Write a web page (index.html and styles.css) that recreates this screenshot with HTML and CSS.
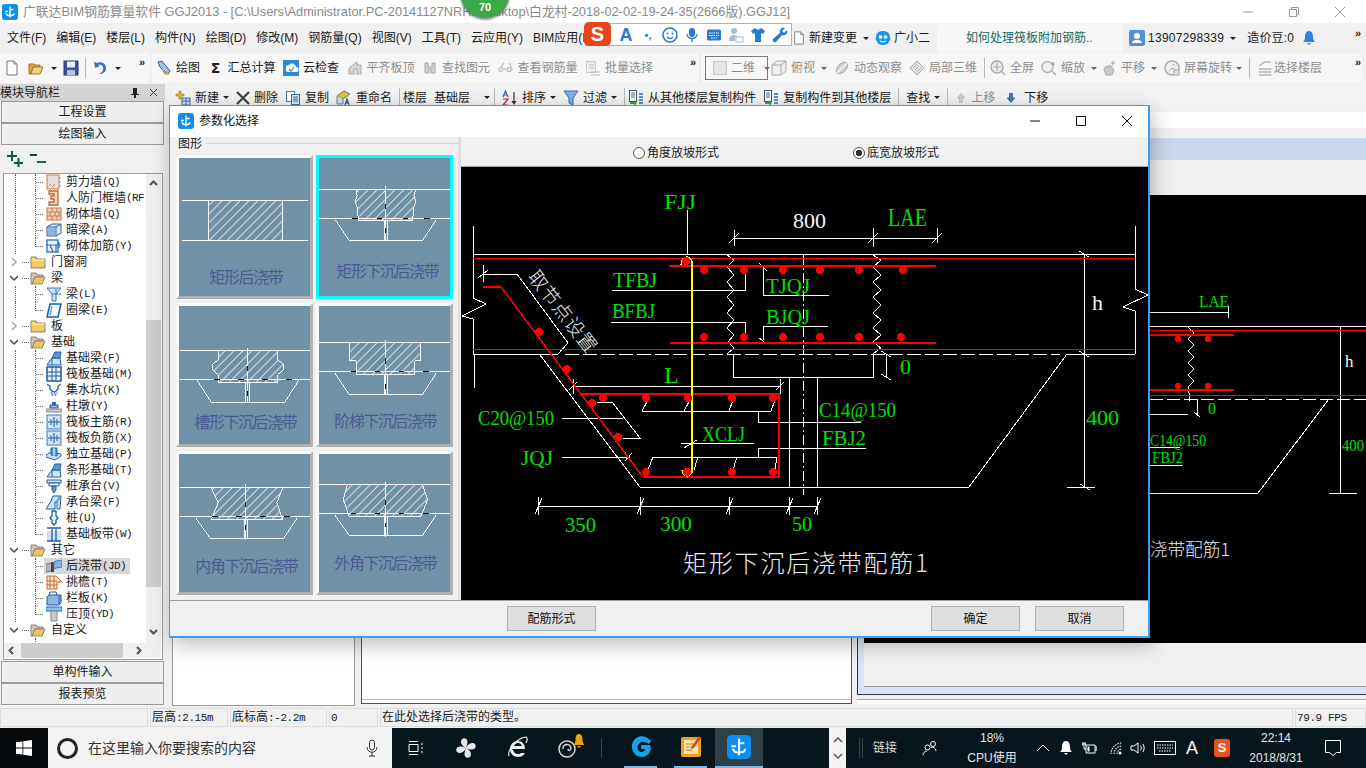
FILE: index.html
```html
<!DOCTYPE html>
<html lang="zh-CN">
<head>
<meta charset="utf-8">
<title>广联达BIM钢筋算量软件 GGJ2013</title>
<link rel="stylesheet" href="styles.css">
</head>
<body>
<svg class="defs" width="0" height="0" aria-hidden="true">
  <defs>
    <pattern id="hatch" patternUnits="userSpaceOnUse" width="9" height="9"><path d="M-1 10L10 -1M-1 1L1 -1M8 10L10 8" stroke="#fff" stroke-width="1" fill="none"/></pattern>
    <symbol id="app" viewBox="0 0 16 16"><rect width="16" height="16" rx="3" fill="#0c8ff0"/><path d="M8 2.500v11M8 5.500h3.500M3 7.500h3M4.200 9.200a2.200 2.200 0 0 0 2.200 2.300h3.400a2.200 2.200 0 0 0 2.200-2.300" fill="none" stroke="#fff" stroke-width="1.400"/></symbol>
    <symbol id="tdoc" viewBox="0 0 16 16"><path d="M3 1h7l3 3v11H3z" fill="#fff" stroke="#777"/><path d="M10 1v3h3" fill="#ddd" stroke="#777"/></symbol>
    <symbol id="topen" viewBox="0 0 16 16"><path d="M1 4h5l1 1h5v2H5L3 14H1z" fill="#d9a93c" stroke="#9c7a28"/><path d="M5 7h10l-3 7H3z" fill="#f3d27a" stroke="#9c7a28"/></symbol>
    <symbol id="tsave" viewBox="0 0 16 16"><rect x="1" y="1" width="14" height="14" fill="#3e4fa8" stroke="#2a3570"/><rect x="4" y="1.500" width="8" height="6" fill="#e8eef8"/><rect x="4" y="10" width="8" height="5" fill="#b9c4dc"/></symbol>
    <symbol id="tundo" viewBox="0 0 16 16"><path d="M2 2l1 6 5-2-2-1c3-1 6 1 5 5-.5 2-2 3-4 4 4 0 7-2 7-6 0-5-6-7-9-5z" fill="#2f78c8"/></symbol>
    <symbol id="tdraw" viewBox="0 0 16 16"><path d="M2 2l4-1 4 5 4 5-2 3-4-3-4-4z" fill="#9ec2e8" stroke="#2f5fa0"/><path d="M6 9l3 5h4" fill="none" stroke="#d9a93c" stroke-width="1.500"/></symbol>
    <symbol id="tcloud" viewBox="0 0 16 16"><rect width="16" height="16" fill="#2e8ad8"/><path d="M3 9a3 3 0 0 1 3-4 4 4 0 0 1 7 2 2.500 2.500 0 0 1 0 5H5a2.500 2.500 0 0 1-2-3z" fill="#fff"/><path d="M6 9l2 2 3-4" fill="none" stroke="#2e8ad8" stroke-width="1.200"/></symbol>
    <symbol id="gflat" viewBox="0 0 16 16"><path d="M2 14V8l8-6v3h4v9z" fill="#d4d4d4" stroke="#aaa"/><path d="M7 14V9h3v5" fill="#eee" stroke="#aaa"/></symbol>
    <symbol id="gfind" viewBox="0 0 16 16"><path d="M3 3h3v4h4V3h3v10H9V9H7v4H3z" fill="#cfcfcf" stroke="#aaa"/></symbol>
    <symbol id="gview" viewBox="0 0 16 16"><path d="M1 10c0-3 3-3 4-1 0 3-4 3-4 1zM9 10c0-3 4-3 5-1 0 3-5 3-5 1zM6 9h2M3 7l3-4M13 7l-1-4" fill="none" stroke="#b5b5b5" stroke-width="1.200"/></symbol>
    <symbol id="gbatch" viewBox="0 0 16 16"><rect x="1.500" y="1.500" width="9" height="11" fill="#eee" stroke="#b5b5b5" stroke-dasharray="2 1"/><path d="M4 5h5M4 8h5M6 12h9M6 15h9" stroke="#bbb"/></symbol>
    <symbol id="gbox" viewBox="0 0 16 16"><path d="M1 5l5-4h9v10l-5 4H1zM1 5h9v10M10 5l5-4" fill="#eee" stroke="#aaa"/></symbol>
    <symbol id="gorbit" viewBox="0 0 16 16"><ellipse cx="8" cy="8" rx="7" ry="4" transform="rotate(-45 8 8)" fill="#d0d0d0" stroke="#aaa"/><path d="M3 13L13 3" stroke="#eee" stroke-width="2"/></symbol>
    <symbol id="glocal" viewBox="0 0 16 16"><path d="M1 8l7-7 7 7-7 7z" fill="#e4e4e4" stroke="#aaa"/><path d="M4 8l4-4M6 10l4-4M8 12l4-4" stroke="#aaa"/></symbol>
    <symbol id="gfull" viewBox="0 0 16 16"><circle cx="7" cy="7" r="6" fill="#eee" stroke="#aaa" stroke-width="1.500"/><path d="M7 3v8M3 7h8M11 11l4 4" stroke="#aaa" stroke-width="1.200"/></symbol>
    <symbol id="gzoom" viewBox="0 0 16 16"><circle cx="6.500" cy="7" r="5.500" fill="#f0f0f0" stroke="#b5b5b5" stroke-width="1.500"/><path d="M11 11l4 4M12 2v4M10 4h4" stroke="#aaa" stroke-width="1.300"/></symbol>
    <symbol id="gpan" viewBox="0 0 16 16"><path d="M3 9l2-3 2 1 1-2 3 2 2 3-2 5H5z" fill="#c8c8c8" stroke="#aaa"/><path d="M12 1v5M10 3h4" stroke="#aaa"/></symbol>
    <symbol id="grot" viewBox="0 0 16 16"><rect x="1" y="1" width="14" height="14" rx="7" fill="#eee" stroke="#aaa" stroke-width="1.500"/><path d="M5 11l3-3 3 1M8 5h3" fill="none" stroke="#aaa"/><rect x="10" y="10" width="5" height="5" fill="#ddd" stroke="#aaa"/></symbol>
    <symbol id="gfloor" viewBox="0 0 16 16"><path d="M2 6l6-4h6M2 9h12M2 12h12M2 15h12" fill="none" stroke="#b5b5b5" stroke-width="1.300"/></symbol>
    <symbol id="rnew" viewBox="0 0 16 16"><path d="M1 4h3V1h2v3h3v2H6v3H4V6H1z" fill="#e6b91e" stroke="#8a6d10" stroke-width=".5"/><rect x="7" y="8" width="8" height="7" fill="#cfe0f5" stroke="#3c6aa8"/><path d="M7 11h8M11 8v7" stroke="#3c6aa8"/></symbol>
    <symbol id="rcopy" viewBox="0 0 16 16"><rect x="1.500" y="1.500" width="8" height="10" fill="#fff" stroke="#5b7ba8"/><rect x="6.500" y="4.500" width="8" height="10" fill="#dce8f6" stroke="#3c6aa8"/><path d="M8 7h5M8 9h5M8 11h5" stroke="#3c6aa8"/></symbol>
    <symbol id="rren" viewBox="0 0 16 16"><path d="M1 6l7-5 6 3-7 5z" fill="#d9c05a" stroke="#8a7a30"/><path d="M1 6v8h6V9" fill="#cde" stroke="#778"/><path d="M9 15l2-6 2 6M10 13h2" fill="none" stroke="#2f5fa0" stroke-width="1.400"/></symbol>
    <symbol id="rsort" viewBox="0 0 16 16"><path d="M12 2v11" stroke="#333" stroke-width="1.200"/><path d="M9.500 11l2.500 4 2.500-4z" fill="#333"/><path d="M1 7l2.500-6L6 7M2 5h3" fill="none" stroke="#2f5fa0" stroke-width="1.200"/><path d="M1 9h5l-5 6h5" fill="none" stroke="#b03030" stroke-width="1.200"/></symbol>
    <symbol id="rfilter" viewBox="0 0 16 16"><path d="M1 1h14L10 8v7l-4-2V8z" fill="#7fb2e6" stroke="#2f6fb8"/></symbol>
    <symbol id="rcp1" viewBox="0 0 16 16"><rect x="1.500" y=".5" width="7" height="11" fill="#fff" stroke="#555"/><path d="M3 3h4M3 5h4M3 7h4" stroke="#2f6fb8"/><path d="M2 12h4v-2l3 3-3 3v-2H2z" fill="#3aa03a"/><path d="M11 4h4M11 7h4M11 10h4M11 13h4" stroke="#2f6fb8" stroke-width="1.400"/></symbol>
    <symbol id="rup" viewBox="0 0 16 16"><path d="M8 2l5 6h-3v6H6V8H3z" fill="#cfcfcf" stroke="#bbb"/></symbol>
    <symbol id="rdown" viewBox="0 0 16 16"><path d="M8 14L3 8h3V2h4v6h3z" fill="#3a78c8" stroke="#2a5aa0"/></symbol>
    <symbol id="robot" viewBox="0 0 16 16"><path d="M8 1c4 0 7 2 7 6 1 2 0 4-1 4 0 3-3 4-6 4s-6-1-6-4c-1 0-2-2-1-4 0-4 3-6 7-6z" fill="#1d9be8"/><circle cx="5.500" cy="7" r="1.800" fill="#fff"/><circle cx="10.500" cy="7" r="1.800" fill="#fff"/><path d="M5 11q3 2 6 0" fill="none" stroke="#fff"/></symbol>
    <symbol id="user" viewBox="0 0 16 16"><rect width="16" height="16" rx="2" fill="#4f94d0"/><circle cx="8" cy="6" r="3" fill="#fff"/><path d="M3 13c1-3 3-3 5-3s4 0 5 3z" fill="#fff"/></symbol>
    <symbol id="bell" viewBox="0 0 16 16"><path d="M8 1c3 0 4 3 4 6s1 4 2 5H2c1-1 2-2 2-5s1-6 4-6zM6 13h4l-2 2z" fill="#2d83e6"/></symbol>
    <symbol id="folder" viewBox="0 0 16 16"><path d="M1 3h5l1 2h8v9H1z" fill="#f0cc62" stroke="#8c8468"/><path d="M1.500 6h13" stroke="#fff3c4"/></symbol>
    <symbol id="folderopen" viewBox="0 0 16 16"><path d="M1 3h5l1 2h6v2H5l-3 7H1z" fill="#cfc8a8" stroke="#8c8468"/><path d="M5 7h10l-3 7H2z" fill="#f0c95e" stroke="#8c8468"/></symbol>
    <symbol id="t1" viewBox="0 0 16 16"><rect x="1" y="1" width="12" height="14" fill="#e4e0dc" stroke="#c87a50"/><path d="M3 12l2-2M6 13l3-3M14 3v2M14 7v2M14 11v2" stroke="#c87a50"/></symbol>
    <symbol id="t2" viewBox="0 0 16 16"><path d="M3 1h9v14H3v-3h5V9H5V6h3V4H3z" fill="#f4d8c4" stroke="#c8642c" stroke-width="1.300"/></symbol>
    <symbol id="t3" viewBox="0 0 16 16"><rect x="1" y="2" width="14" height="12" fill="#f4d2b8" stroke="#c87a50"/><path d="M1 6h14M1 10h14M6 2v4M11 2v4M4 6v4M9 6v4M13 6v4M6 10v4M11 10v4" stroke="#c87a50"/></symbol>
    <symbol id="t4" viewBox="0 0 16 16"><path d="M1 5l5-3h9v9l-5 3H1z" fill="#d6e6f6" stroke="#2f5f98"/><path d="M1 5h9v9M10 5l5-3" fill="none" stroke="#2f5f98"/><rect x="2" y="6" width="7" height="7" fill="#8fb6dd"/></symbol>
    <symbol id="t5" viewBox="0 0 16 16"><rect x="1" y="2" width="11" height="12" fill="#eaf2fb" stroke="#1f6fc0" stroke-width="1.300"/><path d="M0 7h15M10 7v7M4 7l3 7M13 4v6" stroke="#1f6fc0" stroke-width="1.200" fill="none"/></symbol>
    <symbol id="t6" viewBox="0 0 16 16"><path d="M1 2h14l-5 6v7H6V8z" fill="#cfe3f7" stroke="#2878c8"/><path d="M6 8h9M10 8V3" stroke="#2878c8"/></symbol>
    <symbol id="t7" viewBox="0 0 16 16"><path d="M4 2h11l-3 13H1z" fill="#f3f8fd" stroke="#1b5ca8" stroke-width="1.500"/><path d="M6 4l-2 9" stroke="#6aa5e0" stroke-width="1.500"/></symbol>
    <symbol id="t8" viewBox="0 0 16 16"><path d="M1 15l5-7h8l1 7z" fill="#cfe3f7" stroke="#1b5ca8"/><path d="M6 8l3-6h6l-1 6z" fill="#5b96d4" stroke="#1b5ca8"/><path d="M6 15V9" stroke="#1b5ca8"/></symbol>
    <symbol id="t9" viewBox="0 0 16 16"><rect x="1" y="1" width="14" height="14" fill="#eaf2fb" stroke="#1b5ca8" stroke-width="1.500"/><path d="M6 1v14M10 1v14M1 6h14M1 10h14" stroke="#1b5ca8"/></symbol>
    <symbol id="t10" viewBox="0 0 16 16"><path d="M1 2l3 2v3l3 3h2l3-3V4l3-2" fill="none" stroke="#1b5ca8" stroke-width="1.300"/><path d="M4 10h8l-2 4H6z" fill="#bcd4ec"/><path d="M5 11h1M8 11h1M11 11h.5M6 13h1M9 13h1" stroke="#1b5ca8"/></symbol>
    <symbol id="t11" viewBox="0 0 16 16"><path d="M6 4h4v3H6z" fill="#1f6fc0"/><path d="M4 7h8v3H4z" fill="#8fb6dd" stroke="#1b5ca8"/><rect x="0" y="11" width="16" height="3" fill="#c8c8c8" stroke="#888"/></symbol>
    <symbol id="t12" viewBox="0 0 16 16"><rect x="1" y="1" width="14" height="14" fill="#cfe3f7" stroke="#3c78c0"/><path d="M2 8h12M8 3v10M5 5v6M11 5v6" stroke="#1b5ca8"/></symbol>
    <symbol id="t13" viewBox="0 0 16 16"><path d="M0 9l5-3 10 2v2l-6 4-9-3z" fill="#cfe3f7" stroke="#1b5ca8"/><path d="M5 9V2h6v8z" fill="#5b96d4" stroke="#1b5ca8"/><path d="M8 2v8" stroke="#fff"/></symbol>
    <symbol id="t14" viewBox="0 0 16 16"><path d="M0 15l5-8 2-5h8l-1 13H11V8L9 8v7z" fill="#cfe3f7" stroke="#1b5ca8"/><path d="M11 8l3-6" stroke="#5b96d4" stroke-width="2"/></symbol>
    <symbol id="t15" viewBox="0 0 16 16"><path d="M1 2h14v3H1z" fill="#cfe3f7" stroke="#1b5ca8"/><path d="M3 5h10v3H3z" fill="#fff" stroke="#1b5ca8"/><path d="M6 8h4v4l-2 3-2-3z" fill="#5b96d4" stroke="#1b5ca8"/></symbol>
    <symbol id="t16" viewBox="0 0 16 16"><path d="M6 1h4v5l2 2-2 2v3l-2 2-2-2v-3L4 8l2-2z" fill="#eaf2fb" stroke="#1b5ca8" stroke-width="1.300"/></symbol>
    <symbol id="t17" viewBox="0 0 16 16"><path d="M1 2h14M1 15h14" stroke="#1b5ca8" stroke-width="1.500"/><path d="M1 5h14v9H1z" fill="#cfe3f7"/><path d="M6 3v12M10 3v12" stroke="#1b5ca8" stroke-width="1.300"/></symbol>
    <symbol id="t18" viewBox="0 0 16 16"><path d="M0 6l6-1v8l-6 1z" fill="#a8b8c8" stroke="#778"/><path d="M5 4h3v10H5z" fill="#6b3a1c"/><path d="M8 4l2-1 6-1v7l-6 1-2 1z" fill="#7fb2e6" stroke="#4a7ab8"/></symbol>
    <symbol id="t19" viewBox="0 0 16 16"><path d="M1 2h9l5 5v1h-4v7H1z" fill="#fbe6d4" stroke="#c8642c"/><path d="M1 7h10M1 11h10M4 2v13M8 2v13" stroke="#c8642c"/></symbol>
    <symbol id="t20" viewBox="0 0 16 16"><path d="M1 7l2-2h12v8l-2 2H1z" fill="#8fb6dd" stroke="#1b5ca8"/><path d="M3 5l1-3h6l1 3" fill="none" stroke="#1b5ca8"/><path d="M13 6v8" stroke="#1b5ca8"/></symbol>
    <symbol id="t21" viewBox="0 0 16 16"><rect x="0" y="1" width="16" height="4" fill="#8fc0ee" stroke="#1f6fc0"/><rect x="5" y="5" width="6" height="10" fill="#ccc" stroke="#888"/></symbol>
  </defs>
</svg>

<header class="titlebar">
  <svg class="ic16"><use href="#app"/></svg>
  <span class="title-text">广联达BIM钢筋算量软件 GGJ2013 - [C:\Users\Administrator.PC-20141127NRHI\Desktop\白龙村-2018-02-02-19-24-35(2666版).GGJ12]</span>
  <div class="winctl">
    <svg width="12" height="12" viewBox="0 0 12 12"><path d="M1 6h10" stroke="#999"/></svg>
    <svg width="12" height="12" viewBox="0 0 12 12"><path d="M1.500 3.500h7v7h-7zM3.500 3V1.500h7v7H9" fill="none" stroke="#999"/></svg>
    <svg width="12" height="12" viewBox="0 0 12 12"><path d="M1 1l10 10M11 1L1 11" stroke="#999"/></svg>
  </div>
</header>

<nav class="menubar">
  <div class="menu">
    <span>文件(F)</span><span>编辑(E)</span><span>楼层(L)</span><span>构件(N)</span><span>绘图(D)</span><span>修改(M)</span><span>钢筋量(Q)</span><span>视图(V)</span><span>工具(T)</span><span>云应用(Y)</span><span>BIM应用(I)</span>
  </div>
  <div class="menu-right">
    <svg class="ic14"><use href="#tdoc"/></svg>
    <span class="ml3">新建变更</span><i class="caret ml6"></i>
    <svg class="ic16 ml6"><use href="#robot"/></svg>
    <span class="ml3">广小二</span>
    <div class="news-tab">如何处理筏板附加钢筋..</div>
    <svg class="ic16 ml6"><use href="#user"/></svg>
    <span class="phone">13907298339</span><i class="caret ml6"></i>
    <span class="beans">造价豆:0</span>
    <svg class="ic16 bell-ic"><use href="#bell"/></svg>
    <b class="more more-end">»</b>
  </div>
</nav>

<div class="toolbars">
  <div class="tbar tbar-a">
    <svg class="ic16"><use href="#tdoc"/></svg>
    <svg class="ic16 ml8"><use href="#topen"/></svg><i class="caret ml7"></i>
    <svg class="ic16 ml6"><use href="#tsave"/></svg>
    <i class="sep ml6"></i>
    <svg class="ic16 ml6"><use href="#tundo"/></svg><i class="caret ml7"></i>
    <b class="more ml18">»</b>
  </div>
  <div class="tbar tbar-b">
    <span class="tool"><svg class="ic16"><use href="#tdraw"/></svg>绘图</span>
    <span class="tool"><b class="sigma">Σ</b>汇总计算</span>
    <span class="tool"><svg class="ic16"><use href="#tcloud"/></svg>云检查</span>
    <span class="tool off"><svg class="ic16"><use href="#gflat"/></svg>平齐板顶</span>
    <span class="tool off"><svg class="ic16"><use href="#gfind"/></svg>查找图元</span>
    <span class="tool off"><svg class="ic16"><use href="#gview"/></svg>查看钢筋量</span>
    <span class="tool off"><svg class="ic16"><use href="#gbatch"/></svg>批量选择</span>
    <b class="more push">»</b>
  </div>
  <div class="tbar tbar-c">
    <span class="combo off"><i class="swatch"></i>二维<i class="caret"></i></span>
    <span class="tool off"><svg class="ic16"><use href="#gbox"/></svg>俯视<i class="caret ml2"></i></span>
    <span class="tool off"><svg class="ic16"><use href="#gorbit"/></svg>动态观察</span>
    <span class="tool off"><svg class="ic16"><use href="#glocal"/></svg>局部三维</span>
    <i class="sep sep-tight"></i>
    <span class="tool off"><svg class="ic16"><use href="#gfull"/></svg>全屏</span>
    <span class="tool off"><svg class="ic16"><use href="#gzoom"/></svg>缩放<i class="caret ml2"></i></span>
    <span class="tool off nudge"><svg class="ic16"><use href="#gpan"/></svg>平移<i class="caret ml2"></i></span>
    <span class="tool off"><svg class="ic16"><use href="#grot"/></svg>屏幕旋转<i class="caret"></i></span>
    <i class="sep"></i>
    <span class="tool off snug"><svg class="ic16"><use href="#gfloor"/></svg>选择楼层</span>
    <b class="more push">»</b>
  </div>
</div>

<main class="workspace">
  <aside class="nav">
    <div class="nav-head"><span>模块导航栏</span>
      <svg class="nav-pin" width="10" height="12" viewBox="0 0 10 12"><path d="M3 1h4v6h2v1H6v3H4V8H1V7h2z" fill="#222"/></svg>
      <svg width="9" height="9" viewBox="0 0 9 9"><path d="M1 1l7 7M8 1L1 8" stroke="#333"/></svg>
    </div>
    <div class="nav-btn">工程设置</div>
    <div class="nav-btn">绘图输入</div>
    <div class="tree-tools">
      <svg width="17" height="16" viewBox="0 0 17 16"><path d="M0 5h10M5 0v10M7 12h9M11.500 7v9" stroke="#0e5a3c" stroke-width="2"/></svg>
      <svg width="17" height="16" viewBox="0 0 17 16"><path d="M0 4h7" stroke="#0e4a3c" stroke-width="2"/><path d="M7 11h9" stroke="#0e6a4c" stroke-width="2"/></svg>
    </div>
    <div class="tree-box">
      <div class="tree">
        <div class="row"><i class="g"></i><i class="g twig"></i><span class="lab"><svg class="ic16"><use href="#t1"/></svg>剪力墙<b>(Q)</b></span></div>
        <div class="row"><i class="g"></i><i class="g twig"></i><span class="lab"><svg class="ic16"><use href="#t2"/></svg>人防门框墙<b>(RF</b></span></div>
        <div class="row"><i class="g"></i><i class="g twig"></i><span class="lab"><svg class="ic16"><use href="#t3"/></svg>砌体墙<b>(Q)</b></span></div>
        <div class="row"><i class="g"></i><i class="g twig"></i><span class="lab"><svg class="ic16"><use href="#t4"/></svg>暗梁<b>(A)</b></span></div>
        <div class="row"><i class="g"></i><i class="g twig end"></i><span class="lab"><svg class="ic16"><use href="#t5"/></svg>砌体加筋<b>(Y)</b></span></div>
        <div class="row fold"><svg class="exp" width="8" height="10" viewBox="0 0 8 10"><path d="M2 1l4 4-4 4" fill="none" stroke="#a6a6a6" stroke-width="1.500"/></svg><i class="stub"></i><svg class="ic16"><use href="#folder"/></svg><span class="fold-name">门窗洞</span></div>
        <div class="row fold"><svg class="exp" width="8" height="10" viewBox="0 0 8 10"><path d="M0 3l4 4 4-4" fill="none" stroke="#444" stroke-width="1.500"/></svg><i class="stub"></i><svg class="ic16"><use href="#folderopen"/></svg><span class="fold-name">梁</span></div>
        <div class="row"><i class="g"></i><i class="g twig"></i><span class="lab"><svg class="ic16"><use href="#t6"/></svg>梁<b>(L)</b></span></div>
        <div class="row"><i class="g"></i><i class="g twig end"></i><span class="lab"><svg class="ic16"><use href="#t7"/></svg>圈梁<b>(E)</b></span></div>
        <div class="row fold"><svg class="exp" width="8" height="10" viewBox="0 0 8 10"><path d="M2 1l4 4-4 4" fill="none" stroke="#a6a6a6" stroke-width="1.500"/></svg><i class="stub"></i><svg class="ic16"><use href="#folder"/></svg><span class="fold-name">板</span></div>
        <div class="row fold"><svg class="exp" width="8" height="10" viewBox="0 0 8 10"><path d="M0 3l4 4 4-4" fill="none" stroke="#444" stroke-width="1.500"/></svg><i class="stub"></i><svg class="ic16"><use href="#folderopen"/></svg><span class="fold-name">基础</span></div>
        <div class="row"><i class="g"></i><i class="g twig"></i><span class="lab"><svg class="ic16"><use href="#t8"/></svg>基础梁<b>(F)</b></span></div>
        <div class="row"><i class="g"></i><i class="g twig"></i><span class="lab"><svg class="ic16"><use href="#t9"/></svg>筏板基础<b>(M)</b></span></div>
        <div class="row"><i class="g"></i><i class="g twig"></i><span class="lab"><svg class="ic16"><use href="#t10"/></svg>集水坑<b>(K)</b></span></div>
        <div class="row"><i class="g"></i><i class="g twig"></i><span class="lab"><svg class="ic16"><use href="#t11"/></svg>柱墩<b>(Y)</b></span></div>
        <div class="row"><i class="g"></i><i class="g twig"></i><span class="lab"><svg class="ic16"><use href="#t12"/></svg>筏板主筋<b>(R)</b></span></div>
        <div class="row"><i class="g"></i><i class="g twig"></i><span class="lab"><svg class="ic16"><use href="#t12"/></svg>筏板负筋<b>(X)</b></span></div>
        <div class="row"><i class="g"></i><i class="g twig"></i><span class="lab"><svg class="ic16"><use href="#t13"/></svg>独立基础<b>(P)</b></span></div>
        <div class="row"><i class="g"></i><i class="g twig"></i><span class="lab"><svg class="ic16"><use href="#t8"/></svg>条形基础<b>(T)</b></span></div>
        <div class="row"><i class="g"></i><i class="g twig"></i><span class="lab"><svg class="ic16"><use href="#t15"/></svg>桩承台<b>(V)</b></span></div>
        <div class="row"><i class="g"></i><i class="g twig"></i><span class="lab"><svg class="ic16"><use href="#t14"/></svg>承台梁<b>(F)</b></span></div>
        <div class="row"><i class="g"></i><i class="g twig"></i><span class="lab"><svg class="ic16"><use href="#t16"/></svg>桩<b>(U)</b></span></div>
        <div class="row"><i class="g"></i><i class="g twig end"></i><span class="lab"><svg class="ic16"><use href="#t17"/></svg>基础板带<b>(W)</b></span></div>
        <div class="row fold"><svg class="exp" width="8" height="10" viewBox="0 0 8 10"><path d="M0 3l4 4 4-4" fill="none" stroke="#444" stroke-width="1.500"/></svg><i class="stub"></i><svg class="ic16"><use href="#folderopen"/></svg><span class="fold-name">其它</span></div>
        <div class="row"><i class="g"></i><i class="g twig"></i><span class="lab sel"><svg class="ic16"><use href="#t18"/></svg>后浇带<b>(JD)</b></span></div>
        <div class="row"><i class="g"></i><i class="g twig"></i><span class="lab"><svg class="ic16"><use href="#t19"/></svg>挑檐<b>(T)</b></span></div>
        <div class="row"><i class="g"></i><i class="g twig"></i><span class="lab"><svg class="ic16"><use href="#t20"/></svg>栏板<b>(K)</b></span></div>
        <div class="row"><i class="g"></i><i class="g twig end"></i><span class="lab"><svg class="ic16"><use href="#t21"/></svg>压顶<b>(YD)</b></span></div>
        <div class="row fold"><svg class="exp" width="8" height="10" viewBox="0 0 8 10"><path d="M0 3l4 4 4-4" fill="none" stroke="#444" stroke-width="1.500"/></svg><i class="stub"></i><svg class="ic16"><use href="#folderopen"/></svg><span class="fold-name">自定义</span></div>
        <div class="row"><i class="g blank"></i><i class="g twig"></i></div>
      </div>
      <div class="vbar">
        <svg class="vup" width="15" height="15" viewBox="0 0 15 15"><path d="M4 9l3.500-3.500L11 9" fill="none" stroke="#555" stroke-width="2"/></svg>
        <i class="vthumb"></i>
        <svg class="vdown" width="15" height="15" viewBox="0 0 15 15"><path d="M4 6l3.500 3.500L11 6" fill="none" stroke="#555" stroke-width="2"/></svg>
      </div>
      <div class="hbar">
        <svg width="15" height="15" viewBox="0 0 15 15"><path d="M9 4L5.500 7.500 9 11" fill="none" stroke="#555" stroke-width="2"/></svg>
        <i class="hthumb"></i>
        <svg class="hright" width="15" height="15" viewBox="0 0 15 15"><path d="M6 4l3.500 3.500L6 11" fill="none" stroke="#555" stroke-width="2"/></svg>
      </div>
      <div class="corner"></div>
    </div>
    <div class="nav-btn nav-btn-low">单构件输入</div>
    <div class="nav-btn">报表预览</div>
  </aside>

  <section class="work">
    <div class="ribbon">
      <span class="tool"><svg class="ic16"><use href="#rnew"/></svg>新建<i class="caret"></i></span>
      <span class="tool"><svg class="ic14" viewBox="0 0 14 14"><path d="M1 1l12 12M13 1L1 13" stroke="#444" stroke-width="2.200"/></svg>删除</span>
      <span class="tool"><svg class="ic16"><use href="#rcopy"/></svg>复制</span>
      <span class="tool"><svg class="ic16"><use href="#rren"/></svg>重命名</span>
      <i class="sep"></i>
      <span class="floor-label">楼层</span>
      <span class="floor-combo">基础层<i class="caret"></i></span>
      <i class="sep"></i>
      <span class="tool"><svg class="ic16"><use href="#rsort"/></svg>排序<i class="caret"></i></span>
      <span class="tool"><svg class="ic16"><use href="#rfilter"/></svg>过滤<i class="caret"></i></span>
      <i class="sep"></i>
      <span class="tool nudge4"><svg class="ic16"><use href="#rcp1"/></svg>从其他楼层复制构件</span>
      <span class="tool"><svg class="ic16"><use href="#rcp1"/></svg>复制构件到其他楼层</span>
      <i class="sep"></i>
      <span class="tool">查找<i class="caret"></i></span>
      <i class="sep"></i>
      <span class="tool off"><svg class="ic12"><use href="#rup"/></svg>上移</span>
      <span class="tool tool-down"><svg class="ic12"><use href="#rdown"/></svg>下移</span>
    </div>
    <div class="panes">
      <div class="pane pane-list"></div>
      <div class="pane pane-mid"><div class="pane-mid-in"></div></div>
      <div class="pane-stack">
        <div class="pc">
          <div class="pc-input"></div>
          <div class="pc-band"></div>
          <div class="pc-light"></div>
          <div class="pc-body">
            <svg class="pc-art art" viewBox="864 195 502 448" width="502" height="448">
              <g class="w">
                <path d="M1150 326H1366M1340 326V494M1329 493H1357M1150 493H1258L1329 399M1150 312H1228M1228 306V318"/>
                <path d="M1150 399H1366" stroke-dasharray="13 4"/>
                <path d="M1188 327l6 6-6 6 6 6-6 6 6 6-6 6 6 6-6 6 6 6-6 6 1 6v8M1150 414H1188M1197 399V414M1194 412l6 5"/>
              </g>
              <path class="thin" d="M1150 330H1366M1150 395H1366"/>
              <path class="thick" d="M1150 335H1234M1150 390H1234"/>
              <g fill="#f00"><circle cx="1178" cy="339" r="3"/><circle cx="1208" cy="339" r="3"/><circle cx="1178" cy="386" r="3"/><circle cx="1208" cy="386" r="3"/></g>
              <path class="w" d="M1150 447H1180M1150 465H1183"/>
              <g class="g-text">
                <text x="1199" y="307" font-size="17" textLength="30" lengthAdjust="spacingAndGlyphs">LAE</text>
                <text x="1208" y="414" font-size="16">0</text>
                <text x="1150" y="446" font-size="16" textLength="56" lengthAdjust="spacingAndGlyphs">C14@150</text>
                <text x="1152" y="463" font-size="17" textLength="31" lengthAdjust="spacingAndGlyphs">FBJ2</text>
                <text x="1342" y="451" font-size="16" textLength="22" lengthAdjust="spacingAndGlyphs">400</text>
              </g>
              <text class="wt" x="1345" y="367" font-size="17">h</text>
              <text class="cap" x="1132" y="556" font-size="18" textLength="98" lengthAdjust="spacingAndGlyphs">后浇带配筋1</text>
            </svg>
            <div class="pc-foot"></div>
          </div>
        </div>
        <div class="pc-rest"></div>
      </div>
    </div>
  </section>
</main>

<footer class="status">
  <span class="cell c0"></span>
  <span class="cell c1">层高<b>:2.15m</b></span>
  <span class="cell c2">底标高<b>:-2.2m</b></span>
  <span class="cell c3"><b>0</b></span>
  <span class="cell c4">在此处选择后浇带的类型。</span>
  <span class="cell c5"><b>79.9 FPS</b></span>
</footer>

<div class="taskbar">
  <div class="start"><svg width="16" height="16" viewBox="0 0 16 16"><path d="M0 2.300l6.500-.9v6.200H0zM7.300 1.300L16 0v7.600H7.300zM0 8.400h6.500v6.200L0 13.700zM7.300 8.400H16V16l-8.700-1.300z" fill="#fff"/></svg></div>
  <div class="search">
    <i class="cortana"></i>
    <span class="search-text">在这里输入你要搜索的内容</span>
    <svg class="mic" width="12" height="18" viewBox="0 0 12 18"><rect x="3.500" y="1" width="5" height="10" rx="2.500" fill="none" stroke="#333"/><path d="M1 8c0 7 10 7 10 0M6 13v4M3 17h6" fill="none" stroke="#333"/></svg>
  </div>
  <div class="apps">
    <svg class="tv" width="16" height="16" viewBox="0 0 16 16"><path d="M1 4.500h9v7H1zM1 1.500h9M1 14.500h9M13 4h2M13 8h2M13 12h2" fill="none" stroke="#fff"/></svg>
    <svg class="tk1" width="22" height="22" viewBox="0 0 22 22"><path d="M11 11C6 9 5 4 7 2c3-2 8 0 4 9zM11 11c2-5 7-6 9-4 2 3 0 8-9 4zM11 11c5 2 6 7 4 9-3 2-8 0-4-9zM11 11c-2 5-7 6-9 4-2-3 0-8 9-4z" fill="#e6e6e6"/></svg>
    <svg class="tk2" width="22" height="24" viewBox="0 0 22 24"><path d="M5 13h13c0-5-3-8-7-8-5 0-8 4-8 8 0 5 4 8 8 8 3 0 5-1 7-4h-4c-1 1-2 1-3 1-3 0-4-2-6-5zM7 10c1-2 2-3 4-3s3 1 4 3z" fill="#eee"/><path d="M2 20C0 14 10 2 19 1c2 1 1 4 0 6" fill="none" stroke="#eee" stroke-width="1.200"/></svg>
    <span class="tk3"><svg width="22" height="22" viewBox="0 0 22 22"><circle cx="10" cy="12" r="8" fill="none" stroke="#d8d8d8" stroke-width="1.500"/><path d="M6 12a4 4 0 0 1 8-1c0 3-3 3-3 1" fill="none" stroke="#d8d8d8" stroke-width="1.500"/></svg><svg class="tk3-bell" width="12" height="14" viewBox="0 0 12 14"><path d="M6 0c3 0 3.500 3 3.500 6s1 3.500 2 5H.5c1-1.500 2-2 2-5S3 0 6 0zM4 12h4l-2 2z" fill="#e8a317"/></svg></span>
    <i class="tsep"></i>
    <span class="tk-slot run run-g"><svg width="24" height="26" viewBox="0 0 24 26"><path d="M17 3C9 0 2 6 3 14c1 7 8 11 14 8 4-2 6-7 4-11h-9v4h4c0 3-4 4-6 2-3-3-1-9 4-9 3 0 5 1 6 2l2-3c-1-1-3-3-5-4z" fill="#18a0ea"/></svg></span>
    <span class="tk-slot run"><svg width="22" height="24" viewBox="0 0 22 24"><rect x="1" y="2" width="20" height="20" rx="2" fill="#f0a21e"/><rect x="4" y="5" width="14" height="14" fill="#ffe6b0"/><path d="M6 9h8M6 12h8M6 15h6" stroke="#c87a10"/><path d="M19 1l2 2-7 10-3 1 1-3z" fill="#c8501e"/></svg></span>
    <span class="tk-slot active"><svg width="24" height="26" viewBox="0 0 16 16"><use href="#app"/></svg></span>
  </div>
  <div class="tray-arrows">
    <svg width="10" height="8" viewBox="0 0 10 8"><path d="M1 6l4-4 4 4" fill="none" stroke="#555" stroke-width="1.500"/></svg>
    <svg width="10" height="8" viewBox="0 0 10 8"><path d="M1 2l4 4 4-4" fill="none" stroke="#555" stroke-width="1.500"/></svg>
  </div>
  <i class="tray-grip"></i>
  <span class="tray-link">链接</span>
  <svg class="tray-people" width="16" height="16" viewBox="0 0 16 16"><circle cx="5.500" cy="7.500" r="2.500" fill="none" stroke="#fff"/><circle cx="11" cy="4" r="2.500" fill="none" stroke="#fff"/><path d="M1 15c0-2 2-4 4-4M9 7c2 0 5 1 5 4" fill="none" stroke="#fff"/></svg>
  <div class="cpu"><span>18%</span><span>CPU使用</span></div>
  <svg class="ti-up" width="14" height="8" viewBox="0 0 14 8"><path d="M1 7l6-6 6 6" fill="none" stroke="#fff"/></svg>
  <svg class="ti-bell" width="14" height="16" viewBox="0 0 14 16"><path d="M7 1c3 0 4 3 4 6s1 4 2 5H1c1-1 2-2 2-5s1-6 4-6zM5 13h4l-2 2z" fill="#fff"/></svg>
  <svg class="ti-plug" width="16" height="14" viewBox="0 0 16 14"><path d="M5 4h9v8H5zM1 3h4M2 1v4M4 1v4M3 5v3h2M14 6h2v3h-2" fill="none" stroke="#fff"/><rect x="6.500" y="5.500" width="2" height="5" fill="#fff"/></svg>
  <svg class="ti-wifi" width="16" height="14" viewBox="0 0 16 14"><path d="M2 13a11 11 0 0 1 11-11M5 13a8 8 0 0 1 8-8M8 13a5 5 0 0 1 5-5" fill="none" stroke="#ddd" stroke-width="1.200" stroke-dasharray="1.500 1"/><circle cx="11" cy="12" r="1.500" fill="#fff"/></svg>
  <svg class="ti-spk" width="16" height="14" viewBox="0 0 16 14"><path d="M1 5h3l4-3v10L4 9H1zM10.500 4.500c1 1.500 1 3.500 0 5M13 3c1.500 2.500 1.500 5.500 0 8" fill="none" stroke="#fff"/></svg>
  <svg class="ti-kbd" width="22" height="14" viewBox="0 0 22 14"><rect x=".5" y=".5" width="21" height="13" fill="none" stroke="#fff"/><path d="M3 4h16M3 7h16M5 10h12" stroke="#fff" stroke-dasharray="1.500 1"/></svg>
  <span class="tray-a">A</span>
  <span class="tray-s">S</span>
  <div class="clock"><span>22:14</span><span>2018/8/31</span></div>
  <svg class="notif" width="16" height="18" viewBox="0 0 16 18"><path d="M.5 1.500h15v12h-4l-3.500 3-3.500-3h-4z" fill="none" stroke="#fff"/></svg>
</div>

<!-- floating overlays -->
<div class="badge70">70</div>
<div class="ime">
  <span class="ime-s">S</span>
  <span class="ime-i ime-a">A</span>
  <span class="ime-i ime-a ime-dot">•,</span>
  <svg class="ime-g" viewBox="0 0 16 16"><circle cx="8" cy="8" r="7" fill="none" stroke="#2878d0" stroke-width="1.600"/><circle cx="5.500" cy="6.500" r="1" fill="#2878d0"/><circle cx="10.500" cy="6.500" r="1" fill="#2878d0"/><path d="M5 10q3 3 6 0" fill="none" stroke="#2878d0" stroke-width="1.300"/></svg>
  <svg class="ime-g" viewBox="0 0 16 16"><rect x="5" y="1" width="6" height="9" rx="3" fill="#2878d0"/><path d="M3 7c0 6 10 6 10 0M8 12v3" fill="none" stroke="#2878d0" stroke-width="1.400"/></svg>
  <svg class="ime-g" viewBox="0 0 16 16"><rect x="1" y="2.500" width="14" height="11" rx="1.500" fill="#2878d0"/><path d="M3 6h10M3 8.500h10M5 11h6" stroke="#fff" stroke-dasharray="1.500 .8"/></svg>
  <svg class="ime-g" viewBox="0 0 16 16"><circle cx="6" cy="4" r="3" fill="#a9bdd2"/><path d="M1 14c0-4 2-6 5-6 2 0 3 1 4 2H7v4z" fill="#a9bdd2"/><rect x="8" y="10" width="7" height="5" fill="#fff" stroke="#a9bdd2"/></svg>
  <svg class="ime-g" viewBox="0 0 16 16"><path d="M5 1L1 4l2 3 2-1v9h6V6l2 1 2-3-4-3-3 2z" fill="#2878d0"/></svg>
  <svg class="ime-g" viewBox="0 0 16 16"><path d="M15 3l-3 3-2-2 3-3c-3-1-6 1-5 5L1 12c-1 2 1 4 3 3l6-7c4 1 6-2 5-5z" fill="#2878d0"/></svg>
</div>

<div class="dialog">
  <div class="dlg-title">
    <svg class="ic16"><use href="#app"/></svg>
    <span class="dlg-name">参数化选择</span>
    <div class="dlg-ctl">
      <svg width="12" height="12" viewBox="0 0 12 12"><path d="M1 6h10" stroke="#111"/></svg>
      <svg width="12" height="12" viewBox="0 0 12 12"><path d="M1.500 1.500h9v9h-9z" fill="none" stroke="#111"/></svg>
      <svg width="12" height="12" viewBox="0 0 12 12"><path d="M1 1l10 10M11 1L1 11" stroke="#111"/></svg>
    </div>
  </div>
  <div class="dlg-body">
    <div class="shapes">
      <span class="group-label">图形</span>
      <div class="shape-grid">
        <svg class="card art" viewBox="179 158 131 139">
          <rect x="208" y="201" width="75" height="40" fill="url(#hatch)" stroke="#fff"/>
          <path class="w" d="M182 201H308M182 241H308"/>
          <text class="card-text" x="209" y="284" textLength="75">矩形后浇带</text>
        </svg>
        <svg class="card card-on art" viewBox="319 158 131 139">
          <path fill="url(#hatch)" stroke="#fff" d="M356 190H416L414 196 416 202 414 208 413 219V221H358V219L357 208 355 202 357 196z"/>
          <path class="w" d="M319 190H450M319 219H450M335 220L349 241H423L437 220M384 221V241M388 221V241M386 186V242"/>
          <path class="k" d="M352 219H358M377 219H382M403 219H408M424 219H430M386 204V209M386 229V234"/>
          <text class="card-text" x="336" y="278" textLength="104">矩形下沉后浇带</text>
        </svg>
        <svg class="card art" viewBox="179 306 131 139">
          <path fill="url(#hatch)" stroke="#fff" d="M218 351H278V360L284 365V370L278 375V383H218V375L212 370V365L218 360z"/>
          <path class="w" d="M180 351H310M180 380H310M197 381L211 403H285L299 381M246 383V403M250 383V403M248 348V404"/>
          <path class="k" d="M214 380H220M238 380H244M262 380H268M286 380H292M248 366V371M248 392V397"/>
          <text class="card-text" x="194" y="429" textLength="104">槽形下沉后浇带</text>
        </svg>
        <svg class="card art" viewBox="319 306 131 139">
          <path fill="url(#hatch)" stroke="#fff" d="M349 343H421V361H415V375H356V361H349z"/>
          <path class="w" d="M319 343H450M319 372H450M334 373L349 395H423L437 373M384 375V395M388 375V395M386 340V396"/>
          <path class="k" d="M351 372H356M375 372H380M399 372H404M423 372H429M386 358V364M386 385V390"/>
          <text class="card-text" x="334" y="428" textLength="104">阶梯下沉后浇带</text>
        </svg>
        <svg class="card art" viewBox="179 454 131 139">
          <path fill="url(#hatch)" stroke="#fff" d="M211 488H283L277 503 283 520H211L218 503z"/>
          <path class="w" d="M180 488H310M180 517H310M195 518L210 539H284L298 518M244 520V539M248 520V539M246 484V541"/>
          <path class="k" d="M212 517H218M236 517H242M260 517H266M284 517H290M246 502V507M246 526V531"/>
          <text class="card-text" x="195" y="573" textLength="104">内角下沉后浇带</text>
        </svg>
        <svg class="card art" viewBox="319 454 131 139">
          <path fill="url(#hatch)" stroke="#fff" d="M347 485H423L428 500 421 517H349L343 500z"/>
          <path class="w" d="M319 485H450M319 514H450M334 515L349 536H423L437 515M384 517V536M388 517V536M386 482V538"/>
          <path class="k" d="M351 514H356M375 514H380M399 514H404M423 514H429M386 500V505M386 523V528"/>
          <text class="card-text" x="334" y="570" textLength="104">外角下沉后浇带</text>
        </svg>
      </div>
    </div>
    <div class="figure">
      <div class="radios">
        <label class="radio"><i class="dot"></i>角度放坡形式</label>
        <label class="radio"><i class="dot dot-on"></i>底宽放坡形式</label>
      </div>
      <svg class="canvas art" viewBox="461 167 687 433" width="687" height="433">
        <!-- structure outline -->
        <g class="w">
          <path d="M473 254H1135M473 226V298L486 304 462 316 473 319V354M1135 226V289L1148 295 1123 307 1135 311V354"/>
          <path d="M473 354H558M1067 354H1135"/>
          <path d="M565 354H1060" stroke-dasharray="14 4"/>
          <path d="M474 354V388"/>
          <path d="M540 355L640 487H969L1067 354"/>
          <path d="M733 354V377H873V354M789 377V487M817 377V487"/>
          <path d="M727 255L734 260 727 267 734 275 727 282 734 290 727 297 734 305 727 313 734 320 727 328 734 335 728 342 734 348 727 354"/>
          <path d="M873 255L881 260 873 267 881 275 873 282 881 290 873 297 881 305 873 313 881 320 873 328 881 335 873 342 881 348 873 354"/>
          <!-- dims -->
          <path d="M687 210V254M734 238H937M734 230V246M873 228V247M937 228V243M729 243L739 233M868 243L878 233M932 243L942 233"/>
          <path d="M612 290H745V270M611 322H745V338"/>
          <path d="M829 295H763V267M759 263L767 271M828 326H763V340M759 338L767 344"/>
          <path d="M483 274H517L568 343 558 354M483 265V282M478 278L488 270"/>
          <path d="M886 354V378M881 374L891 380M881 351L891 357"/>
          <path d="M1084 254V487M1067 487H1095M1079 251L1089 257M1079 351L1089 357M1080 484L1090 490"/>
          <path d="M573 386H780M573 379V394M569 390L577 382M780 379V394M776 390L784 382"/>
          <path d="M597 402H612L640 438H623"/>
          <path d="M642 411H771M642 411L648 400M684 411L690 400M729 411L733 400M771 411L775 400"/>
          <path d="M758 411V422H861"/>
          <path d="M653 457H777M653 457L648 470M698 457L694 470M737 457L733 470M777 457L775 470"/>
          <path d="M758 457V448H866"/>
          <path d="M562 418H623M562 457H630M625 461L632 453"/>
          <path d="M681 443H754M684 448L697 440"/>
          <path d="M538 506H817M538 497V515M640 497V515M729 497V515M789 497V515M817 497V515M535 514L542 498M637 514L644 498M726 514L733 498M786 514L793 498M814 514L821 498"/>
        </g>
        <path class="w" d="M803 255V495" stroke-dasharray="10 3 2 3"/>
        <!-- reinforcement -->
        <path class="thin" d="M473 258H1135M473 349H1135"/>
        <path class="slope" d="M501 287L643 477"/>
        <path class="thick" d="M483 287H501M669 266H936M670 343H936M582 394H779V477H643"/>
        <path class="yellow" d="M692 261V473" />
        <path class="yellow-arc" d="M681 265Q682 257 687 257T692 265M682 470Q683 476 687 476T692 470"/>
        <g fill="#f00">
          <circle cx="686" cy="261" r="4"/><circle cx="704" cy="270" r="4"/><circle cx="744" cy="270" r="4"/><circle cx="783" cy="270" r="4"/><circle cx="820" cy="270" r="4"/><circle cx="859" cy="270" r="4"/><circle cx="903" cy="270" r="4"/>
          <circle cx="704" cy="337" r="4"/><circle cx="744" cy="337" r="4"/><circle cx="783" cy="337" r="4"/><circle cx="820" cy="337" r="4"/><circle cx="859" cy="337" r="4"/><circle cx="901" cy="337" r="4"/>
          <circle cx="539" cy="332" r="4"/><circle cx="567" cy="369" r="4"/>
          <circle cx="603" cy="398" r="4"/><circle cx="646" cy="398" r="4"/><circle cx="688" cy="398" r="4"/><circle cx="732" cy="398" r="4"/><circle cx="773" cy="398" r="4"/>
          <circle cx="592" cy="403" r="4"/><circle cx="618" cy="437" r="4"/>
          <circle cx="646" cy="472" r="4"/><circle cx="687" cy="472" r="4"/><circle cx="732" cy="472" r="4"/><circle cx="773" cy="472" r="4"/>
        </g>
        <!-- labels -->
        <g class="g-text">
          <text x="664" y="209" font-size="22" textLength="32" lengthAdjust="spacingAndGlyphs">FJJ</text>
          <text x="888" y="226" font-size="25" textLength="39" lengthAdjust="spacingAndGlyphs">LAE</text>
          <text x="613" y="287" font-size="22" textLength="44" lengthAdjust="spacingAndGlyphs">TFBJ</text>
          <text x="612" y="318" font-size="22" textLength="43" lengthAdjust="spacingAndGlyphs">BFBJ</text>
          <text x="766" y="293" font-size="22" textLength="44" lengthAdjust="spacingAndGlyphs">TJQJ</text>
          <text x="766" y="324" font-size="22" textLength="44" lengthAdjust="spacingAndGlyphs">BJQJ</text>
          <text x="900" y="374" font-size="22">0</text>
          <text x="664" y="383" font-size="24">L</text>
          <text x="478" y="425" font-size="22" textLength="76" lengthAdjust="spacingAndGlyphs">C20@150</text>
          <text x="521" y="465" font-size="22" textLength="32" lengthAdjust="spacingAndGlyphs">JQJ</text>
          <text x="702" y="441" font-size="22" textLength="43" lengthAdjust="spacingAndGlyphs">XCLJ</text>
          <text x="819" y="417" font-size="22" textLength="77" lengthAdjust="spacingAndGlyphs">C14@150</text>
          <text x="822" y="445" font-size="22" textLength="44" lengthAdjust="spacingAndGlyphs">FBJ2</text>
          <text x="1086" y="425" font-size="22" textLength="33" lengthAdjust="spacingAndGlyphs">400</text>
          <text x="565" y="532" font-size="22" textLength="31" lengthAdjust="spacingAndGlyphs">350</text>
          <text x="660" y="531" font-size="22" textLength="32" lengthAdjust="spacingAndGlyphs">300</text>
          <text x="792" y="531" font-size="22" textLength="20" lengthAdjust="spacingAndGlyphs">50</text>
        </g>
        <text class="wt" x="793" y="228" font-size="22" textLength="33" lengthAdjust="spacingAndGlyphs">800</text>
        <text class="wt" x="1092" y="310" font-size="22">h</text>
        <text class="cap-rot" transform="translate(527 277) rotate(52)" font-size="19" textLength="98">取节点设置</text>
        <text class="cap" x="683" y="572" font-size="24" textLength="245">矩形下沉后浇带配筋1</text>
      </svg>
    </div>
  </div>
  <div class="dlg-foot">
    <button class="btn btn-form" type="button">配筋形式</button>
    <button class="btn btn-ok" type="button">确定</button>
    <button class="btn" type="button">取消</button>
  </div>
</div>
</body>
</html>
```

FILE: styles.css
```css
* { box-sizing: border-box; }
html, body { margin: 0; padding: 0; }
body {
  width: 1366px; height: 768px; overflow: hidden;
  display: flex; flex-direction: column;
  background: #f0f0f0; color: #1a1a1a;
  font: 12px/16px "Liberation Sans", "Noto Sans CJK SC", sans-serif;
}
i { font-style: normal; display: block; flex: none; }
svg { display: block; flex: none; }
.defs { position: absolute; }
.ic16, .ic14, .ic12 { flex: none; }
.ic16 { width: 16px; height: 16px; }
.ic14 { width: 14px; height: 14px; }
.ic12 { width: 12px; height: 14px; }
.ml2 { margin-left: 2px; } .ml3 { margin-left: 3px; } .ml6 { margin-left: 6px; } .ml7 { margin-left: 7px; } .ml8 { margin-left: 8px; } .ml18 { margin-left: 18px; }
.caret { width: 0; height: 0; border: 3px solid transparent; border-top: 3px solid #222; border-bottom: 0; }
.sep { width: 1px; height: 20px; background: #b8b8b8; }
.more { font: bold 11px/10px "Liberation Sans", sans-serif; color: #222; align-self: flex-start; margin-top: 4px; }
.push { margin-left: auto; }

/* title */
.titlebar { height: 23px; flex: none; background: #fff; display: flex; align-items: center; padding-left: 2px; gap: 5px; }
.title-text { color: #8a8a8a; font-size: 12.800px; white-space: nowrap; }
.winctl { margin-left: auto; display: flex; gap: 34px; padding-right: 20px; }

/* menu */
.menubar { height: 30px; flex: none; display: flex; align-items: center; padding-left: 7px; }
.menu { display: flex; gap: 10px; white-space: nowrap; }
.menu-right { margin-left: auto; display: flex; align-items: center; white-space: nowrap; height: 100%; width: 574px; }
.news-tab { width: 186px; height: 28px; margin: 0 0 0 7px; background: #f8f8f8; border-radius: 3px; color: #0c6a63; line-height: 28px; padding-left: 29px; }
.phone { margin-left: 3px; letter-spacing: .25px; }
.beans { margin-left: 11px; letter-spacing: .2px; }
.bell-ic { margin-left: 7px; }
.more-end { margin-left: auto; margin-top: 5px; padding-right: 5px; }

/* toolbars */
.toolbars { height: 30px; flex: none; display: flex; gap: 2px; padding-right: 4px; }
.tbar { height: 30px; background: #f7f7f7; border-radius: 3px; display: flex; align-items: center; white-space: nowrap; }
.tbar-a { width: 150px; padding-left: 4px; }
.tbar-b { width: 547px; padding: 0 3px 0 4px; gap: 7.500px; }
.tbar-c { flex: 1; padding: 0 1px 0 4px; gap: 7px; }
.tool { display: inline-flex; align-items: center; gap: 4px; }
.nudge { margin-left: -3px; }
.snug { gap: 1px; }
.sep-tight { margin-right: -2px; }
.off { color: #8e8e8e; }
.sigma { width: 16px; font: bold 14px/16px "DejaVu Sans", sans-serif; color: #222; text-align: center; }
.combo { width: 63px; height: 24px; border: 1px solid #7a7a7a; display: flex; align-items: center; gap: 4px; padding-left: 7px; margin-right: -4px; }
.combo .caret { margin-left: 5px; border-top-color: #777; }
.swatch { width: 14px; height: 14px; background: #e4e4e4; border: 1px solid #c0c0c0; }
.off .caret { border-top-color: #666; }

/* workspace */
.workspace { flex: 1; min-height: 0; display: flex; margin-top: 1px; }
.nav { width: 165px; flex: none; display: flex; flex-direction: column; }
.nav-head { height: 17px; flex: none; background: #d4d4d4; display: flex; align-items: center; white-space: nowrap; gap: 9px; padding-right: 7px; }
.nav-head span { margin-right: auto; font-size: 12px; }
.nav-btn { height: 22px; flex: none; margin: 0 1px; background: #efefef; border: 1px solid #9b9b9b; text-align: center; line-height: 21px; }
.nav-btn-low { margin-top: 1px; }
.tree-tools { height: 28px; flex: none; display: flex; gap: 6px; align-items: center; padding-left: 7px; }
.tree-box {
  height: 487px; flex: none; margin: 0 2px 0 3px;
  border: 1px solid #9b9b9b; background: #fff;
  display: grid; grid-template-columns: 142px 15px; grid-template-rows: 469px 15px;
}
.tree { overflow: hidden; }
.row { height: 16px; display: flex; align-items: center; padding-left: 11px; white-space: nowrap; overflow: visible; }
.row b { font: 11px/16px "Liberation Mono", monospace; letter-spacing: -.6px; }
.g { width: 20px; height: 16px; border-left: 1px dotted #666; }
.g.blank { border-left-color: transparent; }
.twig { width: 9px; background: repeating-linear-gradient(90deg, #666 0 1px, transparent 1px 2px) left 8px / 100% 1px no-repeat; }
.twig.end { align-self: flex-start; height: 9px; }
.lab { display: flex; align-items: center; height: 16px; padding: 0 4px 0 2px; }
.lab svg { margin-right: 4px; }
.lab.sel { background: #d8d8d8; }
.row.fold { padding-left: 6px; }
.exp { margin-right: 4px; }
.stub { width: 8px; height: 1px; background: repeating-linear-gradient(90deg, #666 0 1px, transparent 1px 2px); }
.fold-name { margin-left: 5px; }
.vbar { display: flex; flex-direction: column; background: #f0f0f0; padding-bottom: 4px; }
.vup { margin-top: 2px; }
.vthumb { width: 15px; height: 267px; margin-top: 129px; background: #cdcdcd; }
.vdown { margin-top: auto; }
.hbar { display: flex; background: #f0f0f0; }
.hthumb { width: 102px; height: 15px; margin-left: 2px; background: #cdcdcd; }
.hright { margin-left: auto; }
.corner { background: #f0f0f0; }

.work { flex: 1; min-width: 0; display: flex; flex-direction: column; }
.ribbon { height: 21px; flex: none; margin-left: 7px; padding: 6px 0 0 3px; display: flex; align-items: center; gap: 7px; white-space: nowrap; background: #f3f3f3; }
.floor-label { margin-left: -4px; }
.floor-combo { width: 60px; display: flex; align-items: center; gap: 14px; margin-right: -7px; padding-right: 4px; }
.nudge4 { margin-left: -4px; }
.tool-down { margin-left: 3px; gap: 7px; }
.panes { flex: 1; min-height: 0; display: flex; gap: 6px; padding: 7px 0 0 7px; }
.pane { background: #fff; border: 1px solid #9a9a9a; }
.pane-list { width: 183px; }
.pane-mid { width: 491px; padding: 0 0 3px; border-color: #555; margin: 0 -1px 2px 0; }
.pane-mid-in { height: 100%; border-bottom: 1px solid #bbb; }
.pane-stack { flex: 1; display: flex; flex-direction: column; }
.pc { flex: none; height: 583px; display: flex; flex-direction: column; background: #fff; border-left: 1px solid #333; border-bottom: 1px solid #333; }
.pc-input { height: 16px; flex: none; background: #fff; border-bottom: 10px solid #f0f0f0; box-sizing: content-box; }
.pc-band { height: 22px; flex: none; background: #c9d9ea; }
.pc-light { height: 35px; flex: none; background: #f0f0f0; }
.pc-body { flex: 1; min-height: 0; display: flex; flex-direction: column; background: #f0f0f0; border-left: 6px solid #d6e4f3; border-bottom: 7px solid #d6e4f3; }
.pc-art { background: #000; }
.pc-foot { flex: 1; border-bottom: 1px solid #999; }
.pc-rest { height: 5px; margin-top: 4px; background: #fff; border-top: 1px solid #aaa; }

/* status */
.status { height: 20px; flex: none; margin-top: 2px; display: flex; gap: 2px; padding-bottom: 1px; }
.cell { height: 19px; border: 1px solid #dcdcdc; padding-left: 1px; line-height: 17px; white-space: nowrap; }
.cell b { font: 11px/17px "Liberation Mono", monospace; letter-spacing: -.4px; }
.c0 { width: 148px; } .c1 { width: 78px; } .c2 { width: 97px; } .c3 { width: 49px; } .c4 { flex: 1; } .c5 { width: 71px; }

/* taskbar */
.taskbar { height: 40px; flex: none; background: #07161c; display: flex; align-items: center; color: #e6e6e6; }
.start { width: 48px; height: 40px; background: #05090b; display: flex; align-items: center; justify-content: center; }
.search { width: 344px; height: 40px; background: #f2f2f2; display: flex; align-items: center; padding: 0 14px 0 9px; color: #333; font-size: 14px; }
.cortana { width: 21px; height: 21px; border: 3px solid #222; border-radius: 50%; }
.search-text { margin-left: 10px; }
.mic { margin-left: auto; }
.apps { display: flex; align-items: center; height: 40px; width: 437px; }
.tv { margin-left: 16px; }
.tk1 { margin-left: 31px; }
.tk2 { margin-left: 30px; }
.tk3 { margin-left: 28px; display: flex; align-items: center; width: 30px; }
.tk3-bell { margin-left: -6px; margin-top: -14px; }
.tsep { width: 1px; height: 20px; background: #39464c; margin-left: 14px; }
.tk-slot { width: 48px; height: 40px; display: flex; align-items: center; justify-content: center; }
.tk-slot.run { width: 33px; margin-left: 17px; border-bottom: 2px solid #76b9ed; }
.tk-slot.run-g { margin-left: 22px; }
.tk-slot.active { margin-left: 8px; background: #2f4048; border-bottom: 2px solid #76b9ed; }
.tray-arrows { width: 17px; height: 40px; background: #f4f4f4; display: flex; flex-direction: column; align-items: center; justify-content: space-between; padding: 8px 0; }
.tray-grip { width: 4px; height: 20px; margin-left: 13px; border-left: 1px solid #3a474d; border-right: 1px solid #3a474d; }
.tray-link { margin-left: 10px; font-size: 12px; color: #ddd; }
.tray-people { margin-left: 25px; }
.cpu { width: 58px; margin-left: 25px; display: flex; flex-direction: column; align-items: center; font-size: 12px; line-height: 20px; }
.ti-up { margin-left: 15px; }
.ti-bell { margin-left: 9px; }
.ti-plug { margin-left: 8px; }
.ti-wifi { margin-left: 12px; }
.ti-spk { margin-left: 5px; }
.ti-kbd { margin-left: 8px; }
.tray-a { margin-left: 10px; font: 18px/20px "Liberation Sans", sans-serif; color: #fff; }
.tray-s { width: 16px; height: 18px; margin-left: 16px; background: #e8541f; border-radius: 3px; color: #fff; font: bold 13px/18px "Liberation Sans", sans-serif; text-align: center; }
.clock { width: 68px; margin-left: 12px; display: flex; flex-direction: column; align-items: center; line-height: 20px; }
.notif { margin-left: 15px; }

/* overlays */
.badge70 {
  position: absolute; left: 461px; top: -30px; width: 48px; height: 48px; border-radius: 50%;
  background: #3aa94a; color: #fff; font: bold 11px/12px "Liberation Sans", sans-serif;
  display: flex; align-items: flex-end; justify-content: center; padding-bottom: 5px;
  box-shadow: 0 1px 2px 1px rgba(60,60,60,.55);
}
.ime {
  position: absolute; left: 585px; top: 23px; width: 207px; height: 23px;
  background: #fff; border: 1px solid #8cbce8; display: flex; align-items: center; padding-left: 32px; gap: 6px;
}
.ime-s { position: absolute; left: -2px; top: -2px; width: 27px; height: 24px; background: #e8451a; border-radius: 5px; color: #fff; font: bold 20px/24px "Liberation Sans", sans-serif; text-align: center; }
.ime-i { width: 16px; color: #2878d0; text-align: center; }
.ime-a { font: bold 18px/18px "Liberation Sans", sans-serif; }
.ime-dot { font-size: 11px; }
.ime-g { width: 16px; height: 16px; }

/* dialog */
.dialog {
  position: absolute; left: 169px; top: 105px; width: 981px; height: 533px;
  background: #f0f0f0; border: 1px solid #3c9cf0; border-width: 1px 2px 2px 1px;
  display: flex; flex-direction: column;
  box-shadow: 2px 6px 20px rgba(0,0,0,.28);
}
.dlg-title { height: 31px; flex: none; background: #fff; display: flex; align-items: center; padding: 0 0 2px 8px; gap: 5px; }
.dlg-name { color: #111; }
.dlg-ctl { margin-left: auto; display: flex; gap: 34px; padding-right: 15px; }
.dlg-body { flex: 1; min-height: 0; display: flex; }
.shapes { width: 290px; flex: none; padding: 0 0 0 1px; display: flex; flex-direction: column; border-right: 2px solid #ddd; }
.group-label { height: 18px; line-height: 15px; padding-left: 7px; background: linear-gradient(#d8d8d8, #d8d8d8) 34px 6px / 100% 1px no-repeat; }
.shape-grid { display: grid; grid-template-columns: 137px 137px; grid-template-rows: 144px 144px 144px; gap: 4px 3px; padding-left: 5px; }
.card {
  width: 137px; height: 144px; background: #6f92a9;
  border-style: solid; border-width: 3px; border-color: #fafafa #b0b0b0 #b0b0b0 #fafafa;
}
.card-on { border-color: #00ffff; }
.card-text { fill: #4a5a94; font: 16px "Noto Sans CJK SC", sans-serif; }
.figure { flex: 1; min-width: 0; display: flex; flex-direction: column; }
.radios { height: 30px; flex: none; display: flex; align-items: center; padding: 3px 0 0 172px; gap: 134px; border-left: 1px solid #ddd; border-bottom: 1px solid #a6a6a6; }
.radio { display: inline-flex; align-items: center; gap: 2px; white-space: nowrap; }
.dot { width: 12px; height: 12px; border: 1px solid #555; border-radius: 50%; background: #fff; }
.dot-on { background: radial-gradient(circle, #333 0 3px, #fff 3.500px); }
.canvas { background: #000; margin-left: 1px; }
.art * { shape-rendering: crispEdges; }
.art text { shape-rendering: auto; }
.w { fill: none; stroke: #fff; stroke-width: 1; }
.k { fill: none; stroke: #000; stroke-width: 1; }
.thin { fill: none; stroke: #f00; stroke-width: 1; }
.slope { fill: none; stroke: #f00; stroke-width: 1.600; }
.thick { fill: none; stroke: #f00; stroke-width: 2.500; }
.yellow { fill: none; stroke: #ff0; stroke-width: 2; }
.yellow-arc { fill: none; stroke: #ff0; stroke-width: 1.500; }
.g-text text { fill: #00e000; font-family: "Liberation Serif", serif; }
.wt { fill: #f2f6fa; font-family: "Liberation Serif", serif; }
.cap { fill: #e8edf2; font-family: "Noto Sans CJK SC", sans-serif; font-weight: 300; }
.cap-rot { fill: #e8edf2; font-family: "Noto Sans CJK SC", sans-serif; font-weight: 300; }
.dlg-foot { height: 36px; flex: none; border-top: 1px solid #a0a0a0; display: flex; align-items: center; gap: 15px; padding: 0 24px 0 337px; }
.btn { width: 89px; height: 25px; padding: 0; background: #dedede; border: 1px solid #acacac; color: #111; font: 12px/16px "Liberation Sans", "Noto Sans CJK SC", sans-serif; }
.btn-ok { margin-left: auto; }
```
